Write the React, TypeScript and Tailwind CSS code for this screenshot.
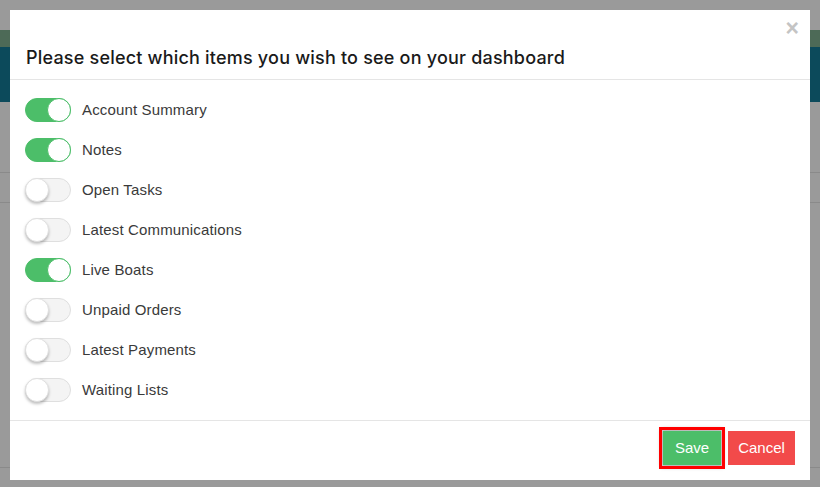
import React, { useState } from "react";

const items = [
  { label: "Account Summary", on: true },
  { label: "Notes", on: true },
  { label: "Open Tasks", on: false },
  { label: "Latest Communications", on: false },
  { label: "Live Boats", on: true },
  { label: "Unpaid Orders", on: false },
  { label: "Latest Payments", on: false },
  { label: "Waiting Lists", on: false },
];

const Toggle = ({ on, onClick }: { on: boolean; onClick: () => void }) => (
  <button
    onClick={onClick}
    className={`relative w-[46px] h-[24px] rounded-full border shrink-0 ${
      on ? "bg-[#4cbe69] border-[#4cbe69]" : "bg-[#f4f4f4] border-[#dfdfdf]"
    }`}
  >
    <span
      className={`absolute top-[-1px] w-[24px] h-[24px] rounded-full bg-white ${
        on
          ? "right-[-1px] border border-[#4cbe69]"
          : "left-[-1px] border border-[#e0e0e0] shadow-[0_2px_3px_rgba(0,0,0,0.25)]"
      }`}
    />
  </button>
);

const App = () => {
  const [state, setState] = useState(items.map((i) => i.on));

  return (
    <div className="relative w-[820px] h-[487px] overflow-hidden bg-[#9a9a9a] font-['Liberation_Sans',Arial,sans-serif]">
      {/* dimmed page behind the dialog */}
      <div className="pt-[30px]">
        <div className="h-[17px] bg-[#4d6a57]" />
        <div className="h-[55px] bg-[#0c4a5b]" />
        <div className="h-[70px]" />
        <div className="h-[30px] border-t border-[#8a8a8a]" />
        <div className="h-[265px] border-t border-[#8a8a8a]" />
        <div className="h-[37px] border-t border-[#8a8a8a]" />
        <div className="border-t border-[#8a8a8a]" />
      </div>

      {/* dialog */}
      <div className="absolute left-[10px] top-[10px] w-[800px] h-[470px] bg-white flex flex-col">
        <div className="relative pt-[36px] pb-[9px] px-4 border-b border-[#e5e5e5]">
          <button className="absolute right-[11px] top-[7px] text-[23px] font-bold text-[#c4c4c4] leading-none">
            ×
          </button>
          <h4 className="text-[18px] leading-6 font-medium text-[#1a1a1a] tracking-[0.2px] font-['Inter',sans-serif]">
            Please select which items you wish to see on your dashboard
          </h4>
        </div>

        <div className="py-[10px] px-[15px] border-b border-[#e5e5e5]">
          {items.map((item, i) => (
            <div key={item.label} className="h-10 flex items-center gap-[11px]">
              <Toggle
                on={state[i]}
                onClick={() =>
                  setState((s) => s.map((v, j) => (j === i ? !v : v)))
                }
              />
              <span className="text-[15px] tracking-[0.15px] text-[#3a3a3a]">
                {item.label}
              </span>
            </div>
          ))}
        </div>

        <div className="flex-1 flex justify-end items-start pt-[10px] pr-[15px] gap-[7px]">
          <button className="w-[58px] h-[34px] bg-[#4cbe69] text-white text-[15px] outline-[3px] outline-[#ff0000] outline-offset-[1px] shadow-[0_0_4px_2px_rgba(0,0,0,0.35)]">
            Save
          </button>
          <button className="w-[67px] h-[34px] bg-[#f24a4a] text-white text-[15px]">
            Cancel
          </button>
        </div>
      </div>
    </div>
  );
};

export default App;
